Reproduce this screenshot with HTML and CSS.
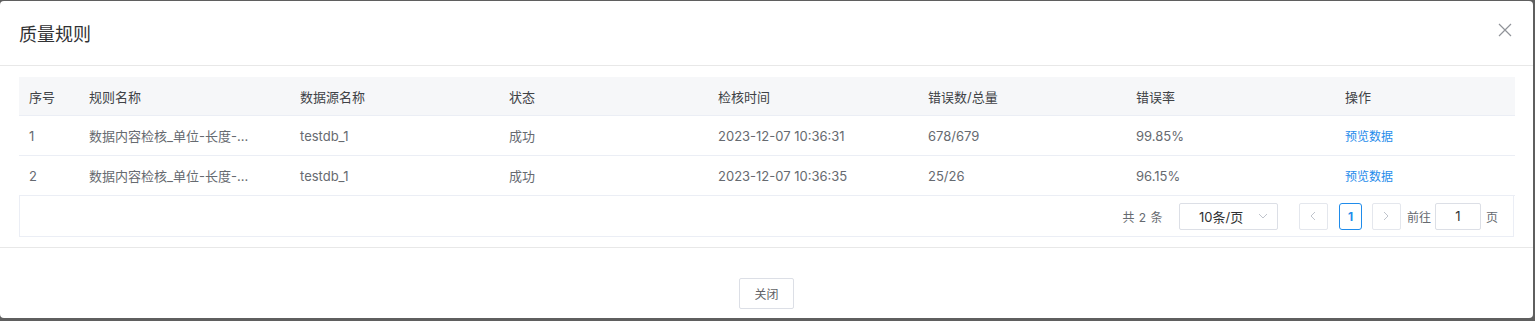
FILE: index.html
```html
<!DOCTYPE html>
<html lang="zh-CN">
<head>
    <meta charset="UTF-8">
    <title>质量规则</title>
    <link rel="stylesheet" href="styles.css">
</head>
<body>
    <div class="dialog">
        <div class="dialog-header">
            <span class="dialog-title">质量规则</span>
            <span class="dialog-close">
                <svg width="14" height="14" viewBox="0 0 14 14"><path d="M1 1L13 13M13 1L1 13" stroke="#909399" stroke-width="1.2" fill="none"/></svg>
            </span>
        </div>
        <div class="dialog-body">
            <table class="grid">
                <colgroup>
                    <col style="width:60px"><col style="width:211px"><col style="width:209px"><col style="width:209px">
                    <col style="width:210px"><col style="width:208px"><col style="width:209px"><col style="width:180px">
                </colgroup>
                <thead>
                    <tr>
                        <th>序号</th><th>规则名称</th><th>数据源名称</th><th>状态</th>
                        <th>检核时间</th><th>错误数/总量</th><th>错误率</th><th>操作</th>
                    </tr>
                </thead>
                <tbody>
                    <tr>
                        <td>1</td><td>数据内容检核_单位-长度-...</td><td>testdb_1</td><td>成功</td>
                        <td>2023-12-07 10:36:31</td><td>678/679</td><td>99.85%</td><td><a class="link">预览数据</a></td>
                    </tr>
                    <tr>
                        <td>2</td><td>数据内容检核_单位-长度-...</td><td>testdb_1</td><td>成功</td>
                        <td>2023-12-07 10:36:35</td><td>25/26</td><td>96.15%</td><td><a class="link">预览数据</a></td>
                    </tr>
                </tbody>
            </table>
            <div class="pager">
                <span class="pager-total">共 2 条</span>
                <span class="pager-size">10条/页
                    <svg width="10" height="6" viewBox="0 0 10 6"><path d="M1 1L5 5L9 1" stroke="#c0c4cc" fill="none"/></svg>
                </span>
                <span class="pager-btn">
                    <svg width="6" height="10" viewBox="0 0 6 10"><path d="M5 1L1 5L5 9" stroke="#c0c4cc" fill="none"/></svg>
                </span>
                <span class="pager-num">1</span>
                <span class="pager-btn">
                    <svg width="6" height="10" viewBox="0 0 6 10"><path d="M1 1L5 5L1 9" stroke="#c0c4cc" fill="none"/></svg>
                </span>
                <span class="pager-jump">前往<span class="pager-input">1</span>页</span>
            </div>
        </div>
        <div class="dialog-footer">
            <button class="btn">关闭</button>
        </div>
    </div>
</body>
</html>
```

FILE: styles.css
```css
body {
    margin: 0;
    background: #5f5f5f;
    font-family: Inter, "Noto Sans CJK SC", sans-serif;
    font-size: 13px;
    color: #666a70;
}

.dialog {
    width: 1533px;
    height: 317px;
    margin-top: 1px;
    background: white;
    border-radius: 4px;
    display: flex;
    flex-direction: column;
}

.dialog-header {
    height: 64px;
    padding: 0 19px;
    display: flex;
    align-items: center;
    justify-content: space-between;
    border-bottom: 1px solid #e8e8e8;
}
.dialog-title { font-size: 18px; color: #303133; }
.dialog-close { display: flex; margin-right: 2px; margin-top: -7px; }

.dialog-body {
    padding: 11px 19px 10px;
    border-bottom: 1px solid #e8e8e8;
}

.grid {
    width: 1496px;
    border-collapse: collapse;
    table-layout: fixed;
}
.grid th, .grid td {
    text-align: left;
    padding: 0 10px;
    white-space: nowrap;
    overflow: hidden;
    border-bottom: 1px solid #ebeef5;
}
.grid th {
    height: 38px;
    background: #f6f7f9;
    font-weight: normal;
    color: #404246;
}
.grid td { height: 39px; }
.link { color: #1f8ceb; font-size: 12px; }

.pager {
    height: 40px;
    border: 1px solid #ebeef5;
    border-top: none;
    display: flex;
    align-items: center;
    justify-content: flex-end;
    padding-right: 15px;
    font-size: 12px;
}
.pager-total { margin-right: 16px; letter-spacing: 0.5px; }
.pager-size {
    width: 99px;
    height: 27px;
    box-sizing: border-box;
    border: 1px solid #dcdfe6;
    border-radius: 2px;
    display: flex;
    align-items: center;
    justify-content: space-between;
    padding: 0 9px 0 19px;
    color: #303133;
    font-size: 13px;
    margin-right: 21px;
}
.pager-btn {
    width: 29px;
    height: 27px;
    box-sizing: border-box;
    border: 1px solid #e4e7ed;
    border-radius: 2px;
    display: flex;
    align-items: center;
    justify-content: center;
}
.pager-num {
    width: 23px;
    height: 27px;
    box-sizing: border-box;
    border: 1px solid #1f8ceb;
    border-radius: 3px;
    color: #1f8ceb;
    font-weight: bold;
    display: flex;
    align-items: center;
    justify-content: center;
    margin: 0 10px 0 11px;
}
.pager-jump { display: flex; align-items: center; margin-left: 6px; }
.pager-input {
    width: 46px;
    height: 27px;
    box-sizing: border-box;
    border: 1px solid #dcdfe6;
    border-radius: 2px;
    margin: 0 5px 0 4px;
    display: flex;
    align-items: center;
    justify-content: center;
    color: #303133;
    font-size: 13px;
}

.dialog-footer {
    flex: 1;
    display: flex;
    justify-content: center;
    align-items: flex-end;
    padding-bottom: 9px;
}
.btn {
    width: 55px;
    height: 31px;
    background: white;
    border: 1px solid #dcdfe6;
    border-radius: 2px;
    font-family: inherit;
    font-size: 12px;
    color: #606266;
}
```
